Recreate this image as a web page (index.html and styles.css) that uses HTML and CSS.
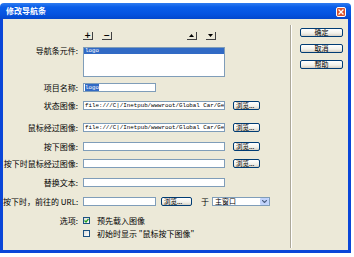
FILE: index.html
```html
<!DOCTYPE html>
<html lang="zh-CN">
<head>
<meta charset="utf-8">
<title>修改导航条</title>
<link rel="stylesheet" href="styles.css">
</head>
<body>
<div class="window">
  <div class="titlebar">
    <span class="title">修改导航条</span>
    <span class="close"><svg width="10" height="10" viewBox="0 0 10 10"><path d="M2.5 2.5 L7.5 7.5 M7.5 2.5 L2.5 7.5" stroke="#fff" stroke-width="1.6" stroke-linecap="square"/></svg></span>
  </div>
  <div class="client">
    <div class="form">
      <div class="row toolbar">
        <div class="label"></div>
        <div class="ctrls">
          <span class="tbtn">+</span>
          <span class="tbtn">−</span>
          <span class="spacer"></span>
          <span class="tbtn"><svg width="5" height="3" viewBox="0 0 5 3"><path d="M2.5 0 L5 3 L0 3Z" fill="#000"/></svg></span>
          <span class="tbtn"><svg width="5" height="3" viewBox="0 0 5 3"><path d="M0 0 L5 0 L2.5 3Z" fill="#000"/></svg></span>
        </div>
      </div>
      <div class="row list-row">
        <div class="label top">导航条元件:</div>
        <div class="listbox"><div class="item sel">logo</div></div>
      </div>
      <div class="row m6">
        <div class="label">项目名称:</div>
        <div class="input short"><span class="hl">logo</span></div>
      </div>
      <div class="row m9">
        <div class="label">状态图像:</div>
        <div class="input long">file:///C|/Inetpub/wwwroot/Global Car/Ge</div>
        <span class="btn browse">浏览...</span>
      </div>
      <div class="row m13">
        <div class="label">鼠标经过图像:</div>
        <div class="input long">file:///C|/Inetpub/wwwroot/Global Car/Ge</div>
        <span class="btn browse">浏览...</span>
      </div>
      <div class="row m10">
        <div class="label">按下图像:</div>
        <div class="input long"></div>
        <span class="btn browse">浏览...</span>
      </div>
      <div class="row m8">
        <div class="label">按下时鼠标经过图像:</div>
        <div class="input long"></div>
        <span class="btn browse">浏览...</span>
      </div>
      <div class="row m10">
        <div class="label">替换文本:</div>
        <div class="input long"></div>
      </div>
      <div class="row m10">
        <div class="label">按下时，前往的 URL:</div>
        <div class="input short"></div>
        <span class="btn browse b2">浏览...</span>
        <span class="yu">于</span>
        <div class="select"><span class="seltext">主窗口</span><span class="arrow"><svg width="5" height="3" viewBox="0 0 5 3"><path d="M0 0 L2.5 2.5 L5 0" stroke="#4D6185" stroke-width="1.2" fill="none"/></svg></span></div>
      </div>
      <div class="row m10">
        <div class="label">选项:</div>
        <span class="check on"><svg width="5" height="5" viewBox="0 0 5 5"><path d="M0.5 2.5 L2 4 L4.5 0.8" stroke="#21A121" stroke-width="1.3" fill="none"/></svg></span>
        <span class="ctext">预先载入图像</span>
      </div>
      <div class="row m4">
        <div class="label"></div>
        <span class="check"></span>
        <span class="ctext">初始时显示 "鼠标按下图像"</span>
      </div>
    </div>
    <div class="sep"></div>
    <div class="side">
      <span class="btn act">确定</span>
      <span class="btn act">取消</span>
      <span class="btn act">帮助</span>
    </div>
  </div>
</div>
</body>
</html>
```
FILE: styles.css
```css
html, body {
  margin: 0;
  padding: 0;
  background: #ffffff;
}
body {
  font-family: "Noto Sans CJK SC", "DejaVu Sans", sans-serif;
  font-size: 8px;
  color: #000;
}
.window {
  margin-top: 3px;
  width: 351px;
  height: 250px;
  display: flex;
  flex-direction: column;
}
.titlebar {
  height: 16px;
  flex: none;
  display: flex;
  align-items: center;
  justify-content: space-between;
  padding: 0 5px 0 6px;
  background: linear-gradient(#2f7cf0 0%, #0a5ee9 25%, #0553e0 70%, #0447cc 100%);
  border-radius: 4px 4px 0 0;
}
.title {
  color: #fff;
  font-weight: bold;
  font-size: 8px;
  line-height: 8px;
}
.close {
  width: 10px;
  height: 10px;
  margin-top: 2px;
  background: #d9532f;
  border: 1px solid #fff;
  border-radius: 2px;
  box-sizing: border-box;
  display: flex;
  align-items: center;
  justify-content: center;
}
.close svg { width: 8px; height: 8px; }
.client {
  flex: 1;
  display: flex;
  background: #ece9d8;
  border: 3px solid #0a46d8;
  border-top: 0;
}
.form {
  width: 287px;
  padding-top: 13px;
  display: flex;
  flex-direction: column;
}
.row {
  display: flex;
  align-items: center;
  height: 9px;
}
.label {
  width: 75px;
  flex: none;
  text-align: right;
  white-space: nowrap;
  margin-right: 5px;
  font-size: 8px;
  line-height: 9px;
}
.label.top { align-self: flex-start; margin-top: -1px; }
.ctrls {
  display: flex;
  width: 142px;
  height: 8px;
}
.toolbar { height: 8px; }
.tbtn {
  width: 10px;
  height: 8px;
  box-sizing: border-box;
  border-right: 1px solid #404040;
  border-bottom: 1px solid #404040;
  background: #ece9d8;
  display: flex;
  align-items: center;
  justify-content: center;
  font-family: "DejaVu Sans", sans-serif;
  font-weight: bold;
  font-size: 8px;
  line-height: 8px;
  margin-right: 9px;
}
.spacer { flex: 1; }
.list-row {
  height: 30px;
  margin-top: 7px;
  align-items: flex-start;
}
.listbox {
  width: 142px;
  height: 30px;
  box-sizing: border-box;
  background: #fff;
  border: 1px solid #7f9db9;
  padding: 0;
}
.item {
  height: 6px;
  line-height: 6px;
  font-family: "Liberation Mono", monospace;
  font-size: 5.8px;
  padding-left: 1px;
}
.item.sel { background: #316ac5; color: #fff; }
.m4 { margin-top: 4px; }
.m6 { margin-top: 6px; }
.m8 { margin-top: 8px; }
.m9 { margin-top: 9px; }
.m10 { margin-top: 10px; }
.m13 { margin-top: 13px; }
.input {
  height: 9px;
  box-sizing: border-box;
  background: #fff;
  border: 1px solid #7f9db9;
  font-family: "Liberation Mono", monospace;
  font-size: 5.8px;
  line-height: 7px;
  padding-left: 1px;
  white-space: nowrap;
  overflow: hidden;
  flex: none;
}
.input.long { width: 142px; }
.input.short { width: 73px; }
.hl { background: #316ac5; color: #fff; }
.btn {
  box-sizing: border-box;
  display: flex;
  align-items: center;
  justify-content: center;
  border: 1px solid #003c74;
  border-radius: 2px;
  background: linear-gradient(#ffffff, #f2f1ea 60%, #d6d0c5);
  font-size: 7px;
  line-height: 7px;
  white-space: nowrap;
  flex: none;
}
.browse {
  width: 27px;
  height: 9px;
  margin-left: 8px;
  font-size: 6.5px;
  justify-content: flex-start;
  padding-left: 2px;
}
.browse.b2 { margin-left: 5px; width: 31px; }
.yu {
  margin-left: 9px;
  font-size: 8px;
  line-height: 9px;
}
.select {
  margin-left: 3px;
  width: 58px;
  height: 9px;
  box-sizing: border-box;
  border: 1px solid #7f9db9;
  background: #fff;
  display: flex;
  align-items: center;
  justify-content: space-between;
}
.seltext { font-size: 7px; line-height: 7px; padding-left: 2px; }
.arrow {
  width: 9px;
  height: 7px;
  background: #c1d3fb;
  border-radius: 1px;
  display: flex;
  align-items: center;
  justify-content: center;
}
.check {
  width: 7px;
  height: 7px;
  box-sizing: border-box;
  border: 1px solid #1c5180;
  background: linear-gradient(135deg, #dcdcd7, #ffffff);
  margin-left: 0;
  display: flex;
  align-items: center;
  justify-content: center;
  flex: none;
}
.ctext {
  margin-left: 7px;
  font-size: 8px;
  line-height: 9px;
  white-space: nowrap;
}
.sep {
  width: 1px;
  background: #aca899;
  border-right: 1px solid #fff;
  margin-top: 6px;
  margin-bottom: 2px;
}
.side {
  flex: 1;
  display: flex;
  flex-direction: column;
  padding: 9px 0 0 8px;
  gap: 7px;
}
.act {
  width: 43px;
  height: 9px;
}
```
